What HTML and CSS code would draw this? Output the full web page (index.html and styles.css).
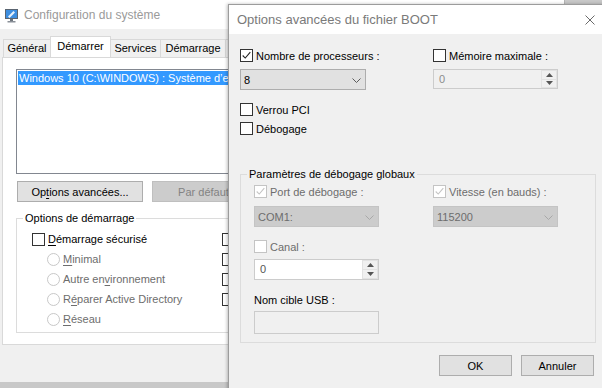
FILE: index.html
```html
<!DOCTYPE html>
<html lang="fr">
<head>
  <meta charset="UTF-8">
  <meta name="viewport" content="width=device-width, initial-scale=1.0">
  <title>Configuration du système</title>
  <link rel="stylesheet" href="styles.css">
</head>
<body>
<div class="desktop">

  <!-- fenêtre principale (msconfig), coupée par la boîte de dialogue -->
  <div class="window main-window">
    <div class="titlebar">
      <svg class="app-icon" viewBox="0 0 15 15" width="15" height="15">
        <rect x="1" y="1" width="13" height="10" fill="#5a6470"/>
        <rect x="2" y="2" width="11" height="8" fill="#3d8ee0"/>
        <path d="M4 8.5 L9.5 3 L11 4.5 L5.5 10 Z" fill="#e8f2fb"/>
        <rect x="6" y="11" width="3" height="2" fill="#6d747c"/>
        <rect x="3.5" y="13" width="8" height="1.5" fill="#8a9098"/>
      </svg>
      <span class="title">Configuration du système</span>
    </div>

    <div class="tabs">
      <span class="tab t-general">Général</span>
      <span class="tab t-boot active">Démarrer</span>
      <span class="tab t-services">Services</span>
      <span class="tab t-startup">Démarrage</span>
      <span class="tab t-tools"></span>
    </div>

    <div class="tab-panel">
      <div class="listbox">
        <div class="list-item selected">Windows 10 (C:\WINDOWS) : Système d’ex</div>
      </div>

      <div class="button-row">
        <button class="btn wide">Op<u>t</u>ions avancées...</button>
        <button class="btn default" disabled>Par défaut</button>
      </div>

      <fieldset class="group boot-options">
        <legend>Options de démarrage</legend>
        <div class="boot-cols">
          <div class="col-left">
            <label class="row"><span class="box"></span><span><u>D</u>émarrage sécurisé</span></label>
            <label class="row indent off"><span class="radio"></span><span><u>M</u>inimal</span></label>
            <label class="row indent off"><span class="radio"></span><span>Autre en<u>v</u>ironnement</span></label>
            <label class="row indent off"><span class="radio"></span><span>R<u>é</u>parer Active Directory</span></label>
            <label class="row indent off"><span class="radio"></span><span><u>R</u>éseau</span></label>
          </div>
          <div class="col-right">
            <div class="row"><span class="box"></span></div>
            <div class="row"><span class="box"></span></div>
            <div class="row"><span class="box"></span></div>
            <div class="row"><span class="box"></span></div>
          </div>
        </div>
      </fieldset>
    </div>
  </div>

  <!-- boîte de dialogue -->
  <div class="window dialog">
    <div class="titlebar">
      <span class="title">Options avancées du fichier BOOT</span>
      <span class="close">
        <svg viewBox="0 0 10 10" width="10" height="10">
          <path d="M0.5 0.5 L9.5 9.5 M9.5 0.5 L0.5 9.5" stroke="#6a6a6a" stroke-width="1"/>
        </svg>
      </span>
    </div>

    <div class="dialog-body">
      <div class="top-grid">
        <div>
          <label class="crow"><span class="box checked">
            <svg viewBox="0 0 13 13"><path d="M2 6.5 L5 9.5 L11 2.5" fill="none" stroke="#222" stroke-width="1.3"/></svg>
          </span><span>Nombre de processeurs :</span></label>
          <div class="combo">
            <span>8</span>
            <svg class="chev" viewBox="0 0 9 5"><path d="M0.5 0.5 L4.5 4.5 L8.5 0.5" fill="none" stroke="#5a5a5a"/></svg>
          </div>
          <label class="crow gap-big"><span class="box"></span><span>Verrou PCI</span></label>
          <label class="crow gap-small"><span class="box"></span><span>Débogage</span></label>
        </div>
        <div>
          <label class="crow"><span class="box"></span><span>Mémoire maximale :</span></label>
          <div class="spin off">
            <span class="spin-value">0</span>
            <span class="spin-buttons">
              <span class="spin-btn"><svg viewBox="0 0 7 4"><path d="M0 4 L3.5 0 L7 4 Z" fill="#555"/></svg></span>
              <span class="spin-btn"><svg viewBox="0 0 7 4"><path d="M0 0 L3.5 4 L7 0 Z" fill="#555"/></svg></span>
            </span>
          </div>
        </div>
      </div>

      <fieldset class="group debug-group">
        <legend>Paramètres de débogage globaux</legend>
        <div class="debug-grid">
          <div>
            <label class="crow off"><span class="box checked">
              <svg viewBox="0 0 13 13"><path d="M2 6.5 L5 9.5 L11 2.5" fill="none" stroke="#c4c4c4" stroke-width="1.3"/></svg>
            </span><span>Port de débogage :</span></label>
            <div class="combo off">
              <span>COM1:</span>
              <svg class="chev" viewBox="0 0 9 5"><path d="M0.5 0.5 L4.5 4.5 L8.5 0.5" fill="none" stroke="#a8a8a8"/></svg>
            </div>
            <label class="crow off gap-big"><span class="box"></span><span>Canal :</span></label>
            <div class="spin channel">
              <span class="spin-value">0</span>
              <span class="spin-buttons">
                <span class="spin-btn"><svg viewBox="0 0 7 4"><path d="M0 4 L3.5 0 L7 4 Z" fill="#555"/></svg></span>
                <span class="spin-btn"><svg viewBox="0 0 7 4"><path d="M0 0 L3.5 4 L7 0 Z" fill="#555"/></svg></span>
              </span>
            </div>
            <div class="field-label">Nom cible USB :</div>
            <div class="textbox"></div>
          </div>
          <div>
            <label class="crow off"><span class="box checked">
              <svg viewBox="0 0 13 13"><path d="M2 6.5 L5 9.5 L11 2.5" fill="none" stroke="#c4c4c4" stroke-width="1.3"/></svg>
            </span><span>Vitesse (en bauds) :</span></label>
            <div class="combo off">
              <span>115200</span>
              <svg class="chev" viewBox="0 0 9 5"><path d="M0.5 0.5 L4.5 4.5 L8.5 0.5" fill="none" stroke="#a8a8a8"/></svg>
            </div>
          </div>
        </div>
      </fieldset>

      <div class="dialog-buttons">
        <button class="btn">OK</button>
        <button class="btn">Annuler</button>
      </div>
    </div>
  </div>

</div>
</body>
</html>
```

FILE: styles.css
```css
* {
  box-sizing: border-box;
}
body {
  margin: 0;
  width: 602px;
  height: 388px;
  overflow: hidden;
  background: #c8c8c8;
  font-family: "Liberation Sans", Arial, sans-serif;
  font-size: 11px;
  color: #000;
}
u {
  text-decoration-thickness: 1px;
  text-underline-offset: 2px;
}
.desktop {
  position: relative;
  width: 602px;
  height: 388px;
}
.window {
  position: absolute;
  background: #f0f0f0;
}
.titlebar {
  display: flex;
  align-items: center;
  background: #fff;
}
.title {
  font-size: 12px;
}

/* fenêtre principale */
.main-window {
  left: 0;
  top: 0;
  width: 565px;
  height: 382px;
  border-right: 1px solid #b4b4b4;
}
.main-window .titlebar {
  height: 29px;
  padding-left: 4px;
}
.main-window .title {
  color: #9a9a9a;
}
.app-icon {
  margin: 1px 5px 0 0;
}
.tabs {
  display: flex;
  align-items: flex-end;
  width: 228px;
  height: 28px;
  padding-left: 3px;
  overflow: hidden;
}
.tab {
  flex: none;
  height: 18px;
  line-height: 16px;
  text-align: center;
  border: 1px solid #d9d9d9;
  border-bottom: none;
  margin-right: -1px;
  background: #f0f0f0;
}
.tab.active {
  position: relative;
  height: 22px;
  line-height: 18px;
  margin-bottom: -1px;
  background: #fff;
  z-index: 1;
}
.t-general { width: 48px; }
.t-boot { width: 61px; }
.t-services { width: 51px; }
.t-startup { width: 66px; }
.t-tools { width: 10px; }

.tab-panel {
  width: 226px;
  margin-left: 2px;
  height: 288px;
  background: #fff;
  border: 1px solid #d9d9d9;
  border-right: none;
  padding: 11px 0 0 13px;
  overflow: hidden;
}
.listbox {
  width: 212px;
  height: 105px;
  border: 1px solid #828790;
  border-right: none;
  padding: 1px 0 1px 1px;
  overflow: hidden;
}
.list-item {
  height: 14px;
  line-height: 14px;
  padding-left: 1px;
  white-space: nowrap;
  overflow: hidden;
}
.list-item.selected {
  background: #3399ff;
  color: #fff;
}
.button-row {
  display: flex;
  gap: 9px;
  margin: 7px 0 0 1px;
}
.btn {
  flex: none;
  height: 21px;
  width: 73px;
  padding: 0;
  font: inherit;
  color: #000;
  background: #e1e1e1;
  border: 1px solid #adadad;
}
.btn.wide {
  width: 126px;
}
.btn.default {
  width: 103px;
}
.btn:disabled {
  background: #cccccc;
  border-color: #bfbfbf;
  color: #838383;
}

/* groupes */
.group {
  margin: 0;
  border: 1px solid #dcdcdc;
  min-width: 0;
}
.group legend {
  padding: 0 2px;
  line-height: 15px;
}
.boot-options {
  width: 212px;
  margin-top: 9px;
  padding: 3px 0 3px 15px;
  border-right: none;
}
.boot-options legend {
  margin-left: -9px;
}
.boot-cols {
  display: grid;
  grid-template-columns: 190px 13px;
}
.row {
  display: flex;
  align-items: center;
  gap: 3px;
  height: 20px;
  white-space: nowrap;
}
.row.indent {
  padding-left: 15px;
}
.off {
  color: #6d6d6d;
}
.box {
  display: inline-block;
  flex: none;
  width: 13px;
  height: 13px;
  border: 1px solid #333;
  background: #fff;
}
.box svg {
  display: block;
  width: 11px;
  height: 11px;
}
.off .box {
  border-color: #c4c4c4;
}
.radio {
  display: inline-block;
  flex: none;
  width: 13px;
  height: 13px;
  border-radius: 50%;
  border: 1px solid #c8c8c8;
  background: #fff;
}

/* boîte de dialogue */
.dialog {
  left: 228px;
  top: 4px;
  width: 380px;
  height: 390px;
  border: 1px solid #9c9c9c;
  box-shadow: -1px 0 3px rgba(0, 0, 0, 0.25);
}
.dialog .titlebar {
  height: 29px;
  padding-left: 8px;
}
.dialog .title {
  font-size: 13px;
  color: #7a7a7a;
}
.close {
  display: flex;
  align-items: center;
  justify-content: center;
  width: 34px;
  height: 29px;
  margin-left: auto;
}
.close svg {
  width: 10px;
  height: 10px;
}
.dialog-body {
  padding: 14px 0 0 11px;
}
.top-grid {
  display: grid;
  grid-template-columns: 193px 125px;
}
.crow {
  display: flex;
  align-items: center;
  gap: 3px;
  height: 15px;
  white-space: nowrap;
}
.crow.gap-big {
  margin-top: 12px;
}
.crow.gap-small {
  margin-top: 4px;
}
.combo {
  position: relative;
  display: flex;
  align-items: center;
  width: 126px;
  height: 21px;
  margin-top: 6px;
  padding-left: 3px;
  background: #e1e1e1;
  border: 1px solid #adadad;
}
.combo.off {
  width: 125px;
  margin-top: 7px;
  background: #cccccc;
  border-color: #c4c4c4;
  color: #6d6d6d;
}
.chev {
  position: absolute;
  right: 4px;
  top: 8px;
  width: 9px;
  height: 5px;
}
.spin {
  display: flex;
  width: 125px;
  height: 20px;
  margin-top: 6px;
  border: 1px solid #cccccc;
  background: #f0f0f0;
}
.spin-value {
  flex: 1;
  padding-left: 5px;
  line-height: 18px;
  color: #8c8c8c;
}
.spin.channel {
  height: 21px;
  margin-top: 5px;
  background: #fff;
}
.spin.channel .spin-value {
  color: #555;
  line-height: 19px;
}
.spin-buttons {
  display: flex;
  flex-direction: column;
  width: 16px;
  border-left: 1px solid #e2e2e2;
}
.spin-btn {
  flex: 1;
  display: flex;
  align-items: center;
  justify-content: center;
  border: 1px solid #e2e2e2;
  border-left: none;
  background: #f0f0f0;
}
.spin-btn + .spin-btn {
  border-top: none;
}
.spin-btn svg {
  width: 7px;
  height: 4px;
}
.debug-group {
  width: 356px;
  margin-top: 31px;
  padding: 2px 0 8px 13px;
}
.debug-group legend {
  margin-left: -7px;
}
.debug-grid {
  display: grid;
  grid-template-columns: 179px 125px;
}
.field-label {
  margin-top: 13px;
  line-height: 15px;
}
.textbox {
  width: 125px;
  height: 23px;
  margin-top: 3px;
  border: 1px solid #cccccc;
  background: #f0f0f0;
}
.dialog-buttons {
  display: flex;
  justify-content: flex-end;
  gap: 9px;
  width: 356px;
  margin-top: 12px;
  padding-right: 2px;
}
```
